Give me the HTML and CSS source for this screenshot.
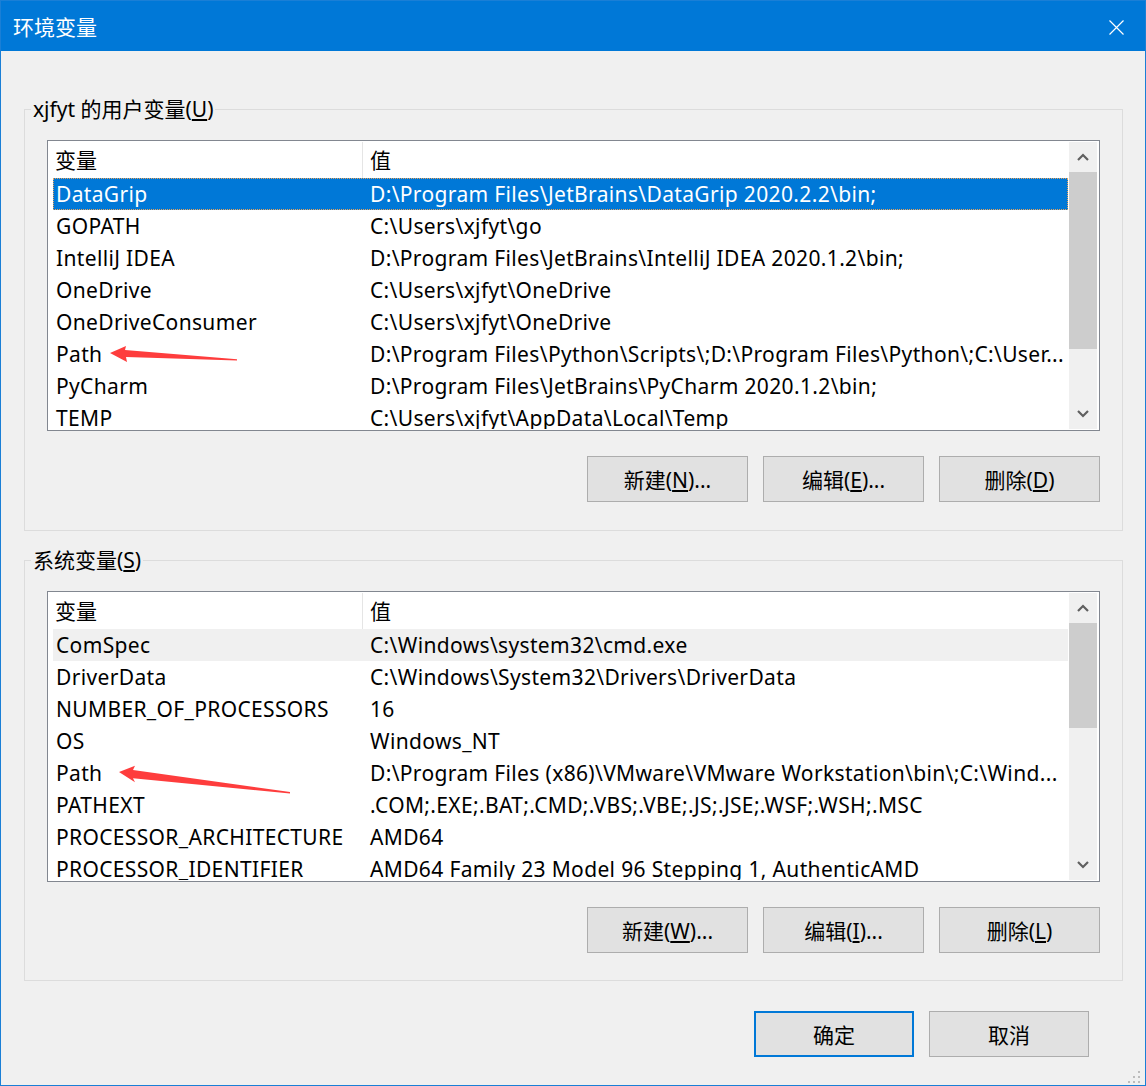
FILE: index.html
```html
<!DOCTYPE html>
<html lang="zh-CN">
<head>
<meta charset="utf-8">
<title>环境变量</title>
<link rel="stylesheet" href="styles.css">
</head>
<body>
<div class="window">
  <div class="titlebar">
    <span class="title">环境变量</span>
    <svg class="close" width="15" height="15" viewBox="0 0 15 15"><path d="M0.5 0.5L14.5 14.5M14.5 0.5L0.5 14.5" stroke="#fff" stroke-width="1.2" fill="none"/></svg>
  </div>
  <div class="content">
    <fieldset class="group group-user">
      <legend>xjfyt 的用户变量(<u>U</u>)</legend>
      <div class="group-body">
        <div class="list">
          <div class="list-main">
            <div class="list-head"><div class="c1">变量</div><div class="c2">值</div></div>
            <div class="rows">
              <div class="row sel"><div class="c1">DataGrip</div><div class="c2">D:\Program Files\JetBrains\DataGrip 2020.2.2\bin;</div></div>
              <div class="row"><div class="c1">GOPATH</div><div class="c2">C:\Users\xjfyt\go</div></div>
              <div class="row"><div class="c1">IntelliJ IDEA</div><div class="c2">D:\Program Files\JetBrains\IntelliJ IDEA 2020.1.2\bin;</div></div>
              <div class="row"><div class="c1">OneDrive</div><div class="c2">C:\Users\xjfyt\OneDrive</div></div>
              <div class="row"><div class="c1">OneDriveConsumer</div><div class="c2">C:\Users\xjfyt\OneDrive</div></div>
              <div class="row"><div class="c1">Path</div><div class="c2">D:\Program Files\Python\Scripts\;D:\Program Files\Python\;C:\User...</div>
                <svg class="arrow" width="200" height="40" viewBox="0 0 200 40"><polygon points="57,15 73,8 72,12 184,21.3 184,22.6 73,19 74,24" fill="#fe3d3d"/></svg>
              </div>
              <div class="row"><div class="c1">PyCharm</div><div class="c2">D:\Program Files\JetBrains\PyCharm 2020.1.2\bin;</div></div>
              <div class="row"><div class="c1">TEMP</div><div class="c2">C:\Users\xjfyt\AppData\Local\Temp</div></div>
            </div>
          </div>
          <div class="scrollbar">
            <div class="sb-btn"><svg width="12" height="8" viewBox="0 0 12 8"><polyline points="1,7 6,2 11,7" fill="none" stroke="#606060" stroke-width="2.2"/></svg></div>
            <div class="sb-track"><div class="sb-thumb" style="height:177px"></div></div>
            <div class="sb-btn"><svg width="12" height="8" viewBox="0 0 12 8"><polyline points="1,1 6,6 11,1" fill="none" stroke="#606060" stroke-width="2.2"/></svg></div>
          </div>
        </div>
        <div class="btn-row">
          <button class="btn">新建(<u>N</u>)...</button>
          <button class="btn">编辑(<u>E</u>)...</button>
          <button class="btn">删除(<u>D</u>)</button>
        </div>
      </div>
    </fieldset>

    <fieldset class="group group-sys">
      <legend>系统变量(<u>S</u>)</legend>
      <div class="group-body">
        <div class="list">
          <div class="list-main">
            <div class="list-head"><div class="c1">变量</div><div class="c2">值</div></div>
            <div class="rows">
              <div class="row inactive"><div class="c1">ComSpec</div><div class="c2">C:\Windows\system32\cmd.exe</div></div>
              <div class="row"><div class="c1">DriverData</div><div class="c2">C:\Windows\System32\Drivers\DriverData</div></div>
              <div class="row"><div class="c1">NUMBER_OF_PROCESSORS</div><div class="c2">16</div></div>
              <div class="row"><div class="c1">OS</div><div class="c2">Windows_NT</div></div>
              <div class="row"><div class="c1">Path</div><div class="c2">D:\Program Files (x86)\VMware\VMware Workstation\bin\;C:\Wind...</div>
                <svg class="arrow" width="250" height="40" viewBox="0 0 250 40"><polygon points="66,15 82,8.7 80,13 237,35 237,36.4 80,21.3 82,25.3" fill="#fe3d3d"/></svg>
              </div>
              <div class="row"><div class="c1">PATHEXT</div><div class="c2">.COM;.EXE;.BAT;.CMD;.VBS;.VBE;.JS;.JSE;.WSF;.WSH;.MSC</div></div>
              <div class="row"><div class="c1">PROCESSOR_ARCHITECTURE</div><div class="c2">AMD64</div></div>
              <div class="row"><div class="c1">PROCESSOR_IDENTIFIER</div><div class="c2">AMD64 Family 23 Model 96 Stepping 1, AuthenticAMD</div></div>
            </div>
          </div>
          <div class="scrollbar">
            <div class="sb-btn"><svg width="12" height="8" viewBox="0 0 12 8"><polyline points="1,7 6,2 11,7" fill="none" stroke="#606060" stroke-width="2.2"/></svg></div>
            <div class="sb-track"><div class="sb-thumb" style="height:105px"></div></div>
            <div class="sb-btn"><svg width="12" height="8" viewBox="0 0 12 8"><polyline points="1,1 6,6 11,1" fill="none" stroke="#606060" stroke-width="2.2"/></svg></div>
          </div>
        </div>
        <div class="btn-row">
          <button class="btn">新建(<u>W</u>)...</button>
          <button class="btn">编辑(<u>I</u>)...</button>
          <button class="btn">删除(<u>L</u>)</button>
        </div>
      </div>
    </fieldset>

    <div class="dialog-buttons">
      <button class="btn dbtn primary">确定</button>
      <button class="btn dbtn">取消</button>
    </div>
  </div>
  <svg class="grip" width="13" height="12" viewBox="0 0 13 12">
    <rect x="10" y="0" width="2" height="2" fill="#bcbcbc"/>
    <rect x="5" y="5" width="2" height="2" fill="#bcbcbc"/>
    <rect x="10" y="5" width="2" height="2" fill="#bcbcbc"/>
    <rect x="0" y="10" width="2" height="2" fill="#bcbcbc"/>
    <rect x="5" y="10" width="2" height="2" fill="#bcbcbc"/>
    <rect x="10" y="10" width="2" height="2" fill="#bcbcbc"/>
  </svg>
</div>
</body>
</html>
```

FILE: styles.css
```css
html, body {
  margin: 0;
  padding: 0;
  background: #f0f0f0;
}

.window {
  position: relative;
  width: 1146px;
  height: 1086px;
  box-sizing: border-box;
  border: 1px solid #1a7fd6;
  background: #f0f0f0;
  font-family: "Noto Sans", "Noto Sans CJK SC", sans-serif;
  font-size: 21px;
  color: #000;
  display: flex;
  flex-direction: column;
}

.titlebar {
  height: 50px;
  flex: none;
  background: #0078d7;
  color: #fff;
  display: flex;
  align-items: center;
  padding-left: 12px;
}

.title {
  font-size: 21px;
  line-height: 28px;
  margin-top: 2px;
}

.close {
  margin-left: auto;
  margin-right: 21px;
  margin-top: 3px;
}

.content {
  padding: 0 22px 0 23px;
  display: flex;
  flex-direction: column;
}

.group {
  margin: 0;
  padding: 0;
  border: 1px solid #dcdcdc;
  min-width: 0;
}

.group-user {
  margin-top: 44px;
}

.group-sys {
  margin-top: 15px;
}

.group legend {
  margin-left: 6px;
  padding: 0 2px;
  line-height: 28px;
  font-size: 21px;
}

.group-body {
  padding: 17px 22px 27px 22px;
}

.list {
  height: 291px;
  box-sizing: border-box;
  border: 1px solid #828790;
  padding: 1px 2px 1px 1px;
  background: #fff;
  display: flex;
}

.list-main {
  flex: 1;
  min-width: 0;
  overflow: hidden;
}

.list-head {
  display: flex;
  height: 36px;
  line-height: 36px;
}

.list-head .c1 {
  width: 314px;
  box-sizing: border-box;
  padding-left: 6px;
  border-right: 1px solid #e5e5e5;
}

.list-head .c2 {
  padding-left: 7px;
}

.rows {
  padding: 0 1px 0 4px;
  letter-spacing: 0.35px;
}

.row {
  position: relative;
  display: flex;
  height: 32px;
  line-height: 32px;
  white-space: nowrap;
}

.row .c1 {
  width: 310px;
  flex: none;
  box-sizing: border-box;
  padding-left: 3px;
}

.row .c2 {
  padding-left: 7px;
}

.row.sel {
  background: #0078d7;
  color: #fff;
  outline: 1px dotted #e9a35c;
  outline-offset: -1px;
}

.row.inactive {
  background: #f0f0f0;
}

.arrow {
  position: absolute;
  left: 0;
  top: 0;
  pointer-events: none;
}

.scrollbar {
  width: 28px;
  flex: none;
  background: #f0f0f0;
  display: flex;
  flex-direction: column;
}

.sb-btn {
  height: 30px;
  flex: none;
  display: flex;
  align-items: center;
  justify-content: center;
}

.sb-track {
  flex: 1;
}

.sb-thumb {
  background: #cdcdcd;
}

.btn-row {
  display: flex;
  justify-content: flex-end;
  gap: 15px;
  margin-top: 25px;
}

.btn {
  width: 161px;
  height: 46px;
  box-sizing: border-box;
  background: #e1e1e1;
  border: 1px solid #adadad;
  border-radius: 0;
  padding: 0;
  font: inherit;
  font-size: 21px;
  color: #000;
}

.group-body .btn-row + * {
  margin: 0;
}

.group-user .group-body {
  padding-bottom: 28px;
}

.dialog-buttons {
  display: flex;
  justify-content: flex-end;
  gap: 15px;
  margin-top: 30px;
  margin-right: 34px;
}

.dbtn {
  width: 160px;
}

.primary {
  border: 2px solid #0078d7;
}

.grip {
  position: absolute;
  right: 4px;
  bottom: 2px;
}
```
